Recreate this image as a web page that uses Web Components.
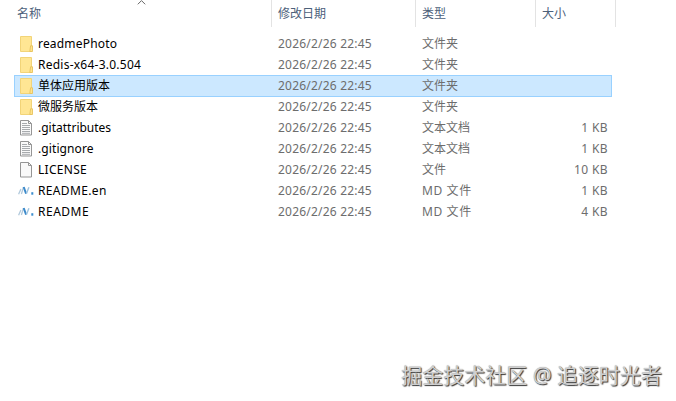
<!DOCTYPE html>
<html lang="zh-CN">
<head>
<meta charset="UTF-8">
<title>文件列表</title>
<style>
  body {
    margin: 0;
    width: 676px;
    height: 401px;
    overflow: hidden;
    background: #fff;
    font-family: "Noto Sans", "Noto Sans CJK SC", sans-serif;
    font-size: 12px;
  }
</style>
</head>
<body>
<file-list>
  <list-header slot="header">
    <header-cell sorted style="--w: 257px">名称</header-cell>
    <header-cell style="--w: 143px">修改日期</header-cell>
    <header-cell style="--w: 119px">类型</header-cell>
    <header-cell style="--w: 79px">大小</header-cell>
  </list-header>
  <file-row icon="folder" name="readmePhoto" type="文件夹" style="--spacing: .19px"></file-row>
  <file-row icon="folder" name="Redis-x64-3.0.504" type="文件夹" style="--spacing: .24px"></file-row>
  <file-row icon="folder" name="单体应用版本" type="文件夹" selected></file-row>
  <file-row icon="folder" name="微服务版本" type="文件夹"></file-row>
  <file-row icon="text" name=".gitattributes" type="文本文档" size="1 KB"></file-row>
  <file-row icon="text" name=".gitignore" type="文本文档" size="1 KB" style="--spacing: .1px"></file-row>
  <file-row icon="blank" name="LICENSE" type="文件" size="10 KB" style="--spacing: .3px"></file-row>
  <file-row icon="markdown" name="README.en" type="MD 文件" size="1 KB" style="--spacing: .35px; --type-spacing: .6px"></file-row>
  <file-row icon="markdown" name="README" type="MD 文件" size="4 KB" style="--spacing: .5px; --type-spacing: .6px"></file-row>
</file-list>
<water-mark>掘金技术社区 @ 追逐时光者</water-mark>

<script>
  class FileIcon extends HTMLElement {
    static icons = {
      folder: `
        <path d="M2.5 .5h11v15h-11z" fill="#ffe694" stroke="#f2d478"/>
        <path d="M12.6 9.8h1.9v5.7h-2.7z" fill="#ffe48d" stroke="#e6c25d" stroke-width=".9"/>`,
      text: `
        <path d="M2.5 .5h8l3 3v11.5h-11z" fill="#fafafa" stroke="#959595"/>
        <path d="M10.5 .5v3h3" fill="none" stroke="#959595"/>
        <path d="M4 3.5h5M4 5.5h8M4 7.5h8M4 9.5h8M4 11.5h8M4 13.3h8" stroke="#a8abae" fill="none"/>`,
      blank: `
        <path d="M2.5 .5h8l3 3v11.5h-11z" fill="#f9f9f9" stroke="#959595"/>
        <path d="M10.5 .5v3h3" fill="none" stroke="#959595"/>`,
      markdown: `
        <path d="M.6 11.3l2.3-5.2M3.4 11l2-6.6" fill="none" stroke="#b1c9dc" stroke-width="1.3"/>
        <path d="M5.7 4l2.4 6.6" fill="none" stroke="#3c8acb" stroke-width="2"/>
        <path d="M8.5 10.6l2.4-6.4" fill="none" stroke="#9dc3e0" stroke-width="1.4"/>
        <path d="M13.3 9.2h2v2.5h-2z" fill="#3c8fcf"/>`
    };

    connectedCallback() {
      const shadow = this.attachShadow({ mode: 'open' });
      shadow.innerHTML = `
        <style>
          :host { display: block; flex: none; width: 16px; height: 16px; }
          svg { display: block; }
        </style>
        <svg width="16" height="16" viewBox="0 0 16 16">${FileIcon.icons[this.getAttribute('name')]}</svg>
      `;
    }
  }

  class HeaderCell extends HTMLElement {
    connectedCallback() {
      const shadow = this.attachShadow({ mode: 'open' });
      shadow.innerHTML = `
        <style>
          :host {
            display: block;
            position: relative;
            box-sizing: content-box;
            width: var(--w);
            height: 27px;
            border-right: 1px solid #e3e3e3;
            color: #4c607a;
            line-height: 27px;
          }
          .label { padding-left: 6px; }
          :host([sorted]) .label { padding-left: 3px; }
          /* стрелка сортировки */
          svg { position: absolute; left: 123px; top: 0; }
        </style>
        <div class="label"><slot></slot></div>
        ${this.hasAttribute('sorted') ? `
          <svg width="9" height="5" viewBox="0 0 9 5">
            <path d="M.8 4.3L4.5 .6l3.7 3.7" fill="none" stroke="#666"/>
          </svg>` : ''}
      `;
    }
  }

  class ListHeader extends HTMLElement {
    connectedCallback() {
      const shadow = this.attachShadow({ mode: 'open' });
      shadow.innerHTML = `
        <style>
          :host { display: flex; height: 27px; }
        </style>
        <slot></slot>
      `;
    }
  }

  class FileRow extends HTMLElement {
    connectedCallback() {
      const shadow = this.attachShadow({ mode: 'open' });
      shadow.innerHTML = `
        <style>
          :host {
            display: grid;
            grid-template-columns: 263px 144px 120px 1fr;
            box-sizing: border-box;
            width: 598px;
            height: 22px;
            margin-bottom: -1px;
            border: 1px solid transparent;
            line-height: 20px;
            color: #6d6d6d;
            white-space: nowrap;
          }
          :host([selected]) {
            background: #cce8ff;
            border-color: #99d1ff;
          }
          .name {
            display: flex;
            align-items: center;
            gap: 4px;
            padding-left: 3px;
            color: #000;
            letter-spacing: var(--spacing, 0);
          }
          .date { letter-spacing: .21px; }
          .type { letter-spacing: var(--type-spacing, 0); }
          .size { padding-right: 3px; text-align: right; letter-spacing: .4px; }
        </style>
        <div class="name"><file-icon name="${this.getAttribute('icon')}"></file-icon><span>${this.getAttribute('name')}</span></div>
        <div class="date">2026/2/26 22:45</div>
        <div class="type">${this.getAttribute('type')}</div>
        <div class="size">${this.getAttribute('size') || ''}</div>
      `;
    }
  }

  class FileList extends HTMLElement {
    connectedCallback() {
      const shadow = this.attachShadow({ mode: 'open' });
      shadow.innerHTML = `
        <style>
          :host { display: block; padding-left: 14px; }
          .rows { padding-top: 6px; }
        </style>
        <slot name="header"></slot>
        <div class="rows"><slot></slot></div>
      `;
    }
  }

  class WaterMark extends HTMLElement {
    connectedCallback() {
      const shadow = this.attachShadow({ mode: 'open' });
      shadow.innerHTML = `
        <style>
          :host {
            position: absolute;
            right: 14px;
            bottom: 11px;
            font-size: 21px;
            line-height: 30px;
            color: #cfcfcf;
            text-shadow: 1px 1px 1px #333, 0 0 1px #999;
            white-space: nowrap;
          }
        </style>
        <slot></slot>
      `;
    }
  }

  customElements.define('file-icon', FileIcon);
  customElements.define('header-cell', HeaderCell);
  customElements.define('list-header', ListHeader);
  customElements.define('file-row', FileRow);
  customElements.define('file-list', FileList);
  customElements.define('water-mark', WaterMark);
</script>
</body>
</html>
